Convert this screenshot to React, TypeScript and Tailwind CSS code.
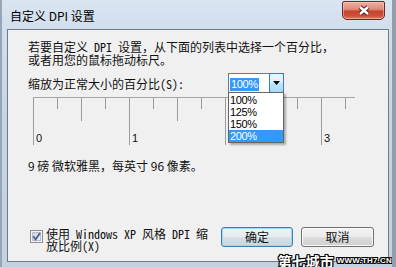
import React from "react";

const ticks = Array.from({ length: 14 }, (_, i) => i);

function Ruler() {
  return (
    <svg width="325" height="49" className="block ml-[5px] mt-[4px]" shapeRendering="crispEdges">
      <line x1="0" y1="0.5" x2="322" y2="0.5" stroke="#a6a6a6" />
      {ticks.map((i) => {
        const x = i * 24 + 0.5;
        const h = i % 4 === 0 ? 48 : i % 2 === 0 ? 24 : 12;
        return <line key={i} x1={x} y1="0" x2={x} y2={h} stroke="#9c9c9c" />;
      })}
      {[0, 1, 3].map((n) => (
        <text
          key={n}
          x={n * 96 + 3}
          y="45"
          fontSize="11"
          fontFamily="Liberation Sans, Arial, sans-serif"
          fill="#111"
          shapeRendering="auto"
        >
          {n}
        </text>
      ))}
    </svg>
  );
}

function Combo() {
  const items = ["100%", "125%", "150%", "200%"];
  return (
    <div className="relative w-[56px] h-[20px] border border-[#6f7a86] bg-white flex">
      <div className="flex-1 pl-[1px] pt-[2px] font-['Liberation_Sans',Arial,sans-serif] text-[11px] tracking-[-0.4px]">
        <span className="inline-block h-[13px] leading-[13px] px-[1px] bg-[#3399ff] text-white">100%</span>
      </div>
      <div className="w-[15px] -my-[1px] -mr-[1px] border border-[#3c7fb1] rounded-[2px] bg-[linear-gradient(180deg,#eaf6fd_0%,#d9f0fc_50%,#bee6fd_50%,#a7d9f5_100%)] flex items-center justify-center">
        <svg width="7" height="4" viewBox="0 0 7 4">
          <path d="M0 0H7L3.5 4Z" fill="#000" />
        </svg>
      </div>
      <ul className="absolute left-[-1px] top-[18px] w-[56px] border border-[#646464] bg-white pt-[1px] shadow-[2px_2px_2px_rgba(0,0,0,0.3)] z-10 font-['Liberation_Sans',Arial,sans-serif] text-[11px] tracking-[-0.4px]">
        {items.map((t, i) => (
          <li
            key={t}
            className={
              i === 3
                ? "h-[12px] leading-[12px] pl-[1px] bg-[#3399ff] text-white"
                : "h-[12px] leading-[12px] pl-[1px] text-black"
            }
          >
            {t}
          </li>
        ))}
      </ul>
    </div>
  );
}

function Checkbox() {
  return (
    <svg width="13" height="13" viewBox="0 0 13 13" className="ml-[2px] mt-[3px] shrink-0">
      <defs>
        <linearGradient id="cbg" x1="0" y1="0" x2="1" y2="1">
          <stop offset="0" stopColor="#cbcfd5" />
          <stop offset="1" stopColor="#f6f6f6" />
        </linearGradient>
      </defs>
      <rect x="0.5" y="0.5" width="12" height="12" fill="#f4f4f4" stroke="#8e8f8f" />
      <rect x="2.5" y="2.5" width="8" height="8" fill="url(#cbg)" stroke="#b9bec6" />
      <path d="M3.2 6.2 L5.6 9.4 L10 3" stroke="#4a5f9a" strokeWidth="1.8" fill="none" />
    </svg>
  );
}

const outline =
  "[text-shadow:1px_0_#000,-1px_0_#000,0_1px_#000,0_-1px_#000,1px_1px_#000,-1px_-1px_#000,1px_-1px_#000,-1px_1px_#000]";

export default function App() {
  return (
    <div className="relative w-[396px] h-[267px] overflow-hidden flex flex-col bg-[linear-gradient(180deg,#dae5f2_0%,#d0ddec_12%,#c6d5e6_45%,#c3d1e1_100%)] border-l-2 border-l-[#97a5b5] border-r-[4px] border-r-[#929eab]">
      {/* title bar */}
      <div className="h-[29px] shrink-0 flex items-start">
        <span className="ml-[8px] mt-[9px] text-[12px] leading-[14px] text-black font-['Noto_Sans_CJK_SC',sans-serif]">
          自定义 DPI 设置
        </span>
        <div className="ml-auto mr-[7px] mt-[1px] w-[43px] h-[19px] rounded-b-[5px] rounded-t-[2px] border border-[#6b2a20] bg-[linear-gradient(180deg,#eab0a2_0%,#e08c78_42%,#c8432d_55%,#cf5039_82%,#e0806a_100%)] shadow-[inset_0_0_0_1px_rgba(255,220,210,0.45)] flex items-center justify-center">
          <svg width="14" height="11" viewBox="0 0 14 11">
            <path d="M3 2 L11 9 M11 2 L3 9" stroke="#5a2018" strokeWidth="4.4" />
            <path d="M3 2 L11 9 M11 2 L3 9" stroke="#ffffff" strokeWidth="2.4" />
          </svg>
        </div>
      </div>

      {/* client area */}
      <div className="flex-1 ml-[5px] mr-[3px] mb-[5px] border border-[#6f7a88] bg-[#f0f0f0] flex flex-col pl-[20px] pt-[10px] pb-[9px] text-[12px] text-[#111] font-['Noto_Sans_Mono_CJK_SC','Noto_Sans_CJK_SC',sans-serif]">
        <p className="leading-[13px] whitespace-nowrap">
          若要自定义 DPI 设置，从下面的列表中选择一个百分比，
          <br />
          或者用您的鼠标拖动标尺。
        </p>
        <div className="mt-[7px] flex items-center h-[20px]">
          <span className="w-[200px] leading-[13px] whitespace-nowrap">缩放为正常大小的百分比(S):</span>
          <Combo />
        </div>
        <Ruler />
        <p className="mt-[13px] leading-[13px] whitespace-nowrap font-['Noto_Sans_CJK_SC',sans-serif]">
          9 磅 微软雅黑，每英寸 96 像素。
        </p>
        <div className="mt-auto flex items-start h-[25px]">
          <Checkbox />
          <span className="ml-[3px] w-[175px] mt-[1px] leading-[12px] whitespace-nowrap">
            使用 Windows XP 风格 DPI 缩
            <br />
            放比例(X)
          </span>
          <button className="w-[72px] h-[20px] rounded-[3px] border border-[#3c7fb1] bg-[linear-gradient(180deg,#eef2f5_0%,#e6ebef_50%,#d9e0e6_50%,#ccd5dd_100%)] shadow-[inset_0_0_0_1px_#9fd7f3] flex items-center justify-center leading-[14px] text-[#111]">
            确定
          </button>
          <button className="ml-[8px] w-[73px] h-[20px] rounded-[3px] border border-[#707070] bg-[linear-gradient(180deg,#f2f2f2_0%,#ebebeb_50%,#dddddd_50%,#cfcfcf_100%)] shadow-[inset_0_0_0_1px_#fbfbfb] flex items-center justify-center leading-[14px] text-[#111]">
            取消
          </button>
        </div>
      </div>

      {/* watermark */}
      <div className="absolute right-[0px] bottom-[-3px] flex items-end gap-[3px] text-white">
        <span className={`text-[14px] font-bold leading-[18px] font-['Noto_Sans_CJK_SC',sans-serif] ${outline}`}>
          第七城市
        </span>
        <span className={`mb-[5px] text-[8px] font-bold leading-[9px] tracking-[0.2px] font-['Liberation_Sans',Arial,sans-serif] ${outline}`}>
          WWW.TH7.CN
        </span>
      </div>
    </div>
  );
}
